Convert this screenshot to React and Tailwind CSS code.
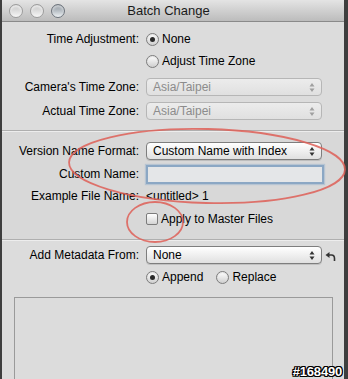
import React from "react";

function Arrows({ color }) {
  return (
    <svg width="6" height="9" viewBox="0 0 6 9">
      <path d="M3 0 L5.5 3.5 H0.5 Z M3 9 L0.5 5.5 H5.5 Z" fill={color} />
    </svg>
  );
}

function Popup({ value, disabled }) {
  return (
    <div
      className={
        disabled
          ? "flex h-[18px] w-[176px] items-center justify-between rounded-[4px] border border-[#b6b6b6] bg-gradient-to-b from-[#ececec] to-[#e0e0e0] pl-[6px] pr-[6px] text-[#8c8c8c]"
          : "flex h-[18px] w-[176px] items-center justify-between rounded-[4px] border border-[#7e7e7e] bg-gradient-to-b from-white to-[#e0e0e0] pl-[6px] pr-[6px] text-black shadow-[0_1px_0_rgba(0,0,0,0.12)]"
      }
    >
      <span className="leading-none">{value}</span>
      <Arrows color={disabled ? "#a0a0a0" : "#333"} />
    </div>
  );
}

function Radio({ checked, label }) {
  return (
    <div className="flex items-center gap-[3px]">
      <div className="flex h-[13px] w-[13px] items-center justify-center rounded-full border border-[#7c7c7c] bg-gradient-to-b from-white to-[#cfcfcf] shadow-[inset_0_1px_1px_rgba(0,0,0,0.1)]">
        {checked && <div className="h-[5px] w-[5px] rounded-full bg-[#2a2a2a]" />}
      </div>
      <span>{label}</span>
    </div>
  );
}

function Row({ label, children, className = "" }) {
  return (
    <div className={"flex h-[22px] items-center gap-[7px] " + className}>
      <div className="w-[137px] shrink-0 text-right">{label}</div>
      {children}
    </div>
  );
}

function Light({ dark }) {
  return (
    <div
      className={
        dark
          ? "h-[14px] w-[14px] rounded-full border border-[#6d747c] bg-gradient-to-b from-[#8e969e] via-[#b9c0c6] to-[#eef2f4] shadow-[inset_0_2px_2px_rgba(255,255,255,0.5)]"
          : "h-[14px] w-[14px] rounded-full border border-[#9c9c9c] bg-gradient-to-b from-[#c4c4c4] via-[#dedede] to-[#f7f7f7] shadow-[inset_0_2px_2px_rgba(255,255,255,0.6)]"
      }
    />
  );
}

export default function App() {
  return (
    <div className="relative flex h-[379px] w-[348px] overflow-hidden bg-[#3e3e3e] pl-[2px] pr-[4px] font-['Liberation_Sans',Arial,sans-serif] text-[12px] text-black">
      <div className="flex flex-1 flex-col bg-[#dcdcdc]">
        {/* title bar */}
        <div className="flex h-[22px] shrink-0 items-center border-b border-[#8a8a8a] bg-gradient-to-b from-[#e4e4e4] to-[#bcbcbc]">
          <div className="flex w-[68px] items-center gap-[7px] pl-[7px]">
            <Light />
            <Light />
            <Light dark />
          </div>
          <div className="flex-1 text-center text-[13px] leading-none text-[#1a1a1a]">Batch Change</div>
          <div className="w-[77px]" />
        </div>

        <div className="flex flex-col pt-[6px]">
          <Row label="Time Adjustment:">
            <Radio checked label="None" />
          </Row>
          <Row label="">
            <Radio label="Adjust Time Zone" />
          </Row>
          <Row label="Camera's Time Zone:" className="mt-[4px]">
            <Popup value="Asia/Taipei" disabled />
          </Row>
          <Row label="Actual Time Zone:" className="mt-[2px]">
            <Popup value="Asia/Taipei" disabled />
          </Row>

          <div className="mt-[8px] border-t border-b border-t-[#afafaf] border-b-[#ededed]" />

          <div className="bg-[#d8d8d8]">
            <Row label="Version Name Format:" className="mt-[8px]">
              <Popup value="Custom Name with Index" />
            </Row>
            <Row label="Custom Name:" className="mt-[1px]">
              <div className="h-[19px] w-[178px] border-2 border-[#8ba7c4] bg-[#e4e6e8] shadow-[0_0_1px_1px_rgba(120,160,200,0.35)]" />
            </Row>
            <Row label="Example File Name:">
              <span>&lt;untitled&gt; 1</span>
            </Row>
            <div className="mt-[1px] flex h-[22px] items-center gap-[3px] pl-[144px]">
              <div className="h-[12px] w-[12px] rounded-[2px] border border-[#7c7c7c] bg-gradient-to-b from-white to-[#d4d4d4]" />
              <span>Apply to Master Files</span>
            </div>
            <div className="h-[9px]" />
          </div>

          <div className="border-t border-b border-t-[#afafaf] border-b-[#ededed]" />

          <Row label="Add Metadata From:" className="mt-[3px]">
            <div className="flex items-center gap-[3px]">
              <Popup value="None" />
              <svg width="11" height="10" viewBox="0 0 11 10" className="mt-[4px]">
                <path d="M4 3 H6.5 C8.5 3 9.5 4.5 9.5 6.5 V9" fill="none" stroke="#333" strokeWidth="1.6" />
                <path d="M0.5 3 L4.5 0 V6 Z" fill="#333" />
              </svg>
            </div>
          </Row>
          <div className="flex h-[22px] items-center gap-[13px] pl-[144px]">
            <Radio checked label="Append" />
            <Radio label="Replace" />
          </div>

          <div className="ml-[12px] mt-[9px] h-[100px] w-[319px] border border-[#9a9a9a] bg-[#dcdcdc]" />
        </div>
      </div>

      {/* red annotation marks */}
      <svg className="pointer-events-none absolute inset-0" width="348" height="379" viewBox="0 0 348 379">
        <ellipse cx="207" cy="166" rx="138" ry="37" transform="rotate(1.5 207 166)" fill="none" stroke="#de5f57" strokeWidth="1.8" opacity="0.85" />
        <ellipse cx="155" cy="222" rx="28" ry="20" fill="none" stroke="#de5f57" strokeWidth="1.8" opacity="0.85" />
      </svg>

      <div className="absolute bottom-[1px] right-[6px] text-[13px] font-bold leading-none tracking-[-0.2px] text-white [text-shadow:1px_0_0_#000,-1px_0_0_#000,0_1px_0_#000,0_-1px_0_#000,1px_1px_0_#000,-1px_-1px_0_#000,1px_-1px_0_#000,-1px_1px_0_#000]">
        #168490
      </div>
    </div>
  );
}
